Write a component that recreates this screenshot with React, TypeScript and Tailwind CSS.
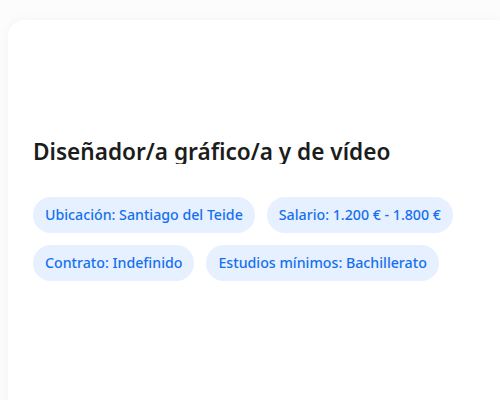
export default function App() {
  const chips = [
    'Ubicación: Santiago del Teide',
    'Salario: 1.200 € - 1.800 €',
    'Contrato: Indefinido',
    'Estudios mínimos: Bachillerato',
  ]

  return (
    <div className="min-h-screen bg-[#fcfcfc] pl-2 pt-5 font-['Noto_Sans',sans-serif]">
      <div className="h-[400px] rounded-tl-2xl bg-white shadow-[0_0_12px_rgba(0,0,0,0.04)] px-[25px] pt-[120px]">
        <h2 className="h-[24px] overflow-hidden text-[22.6px] font-semibold leading-[24px] text-[#1c1c1c]">
          Diseñador/a gráfico/a y de vídeo
        </h2>
        <div className="mt-[33px] flex max-w-[440px] flex-wrap gap-3">
          {chips.map((c) => (
            <span key={c} className="rounded-full bg-[#e6f0ff] px-3 py-[8px] text-[14.2px] font-medium leading-5 text-[#1570f0]">
              {c}
            </span>
          ))}
        </div>
      </div>
    </div>
  )
}
